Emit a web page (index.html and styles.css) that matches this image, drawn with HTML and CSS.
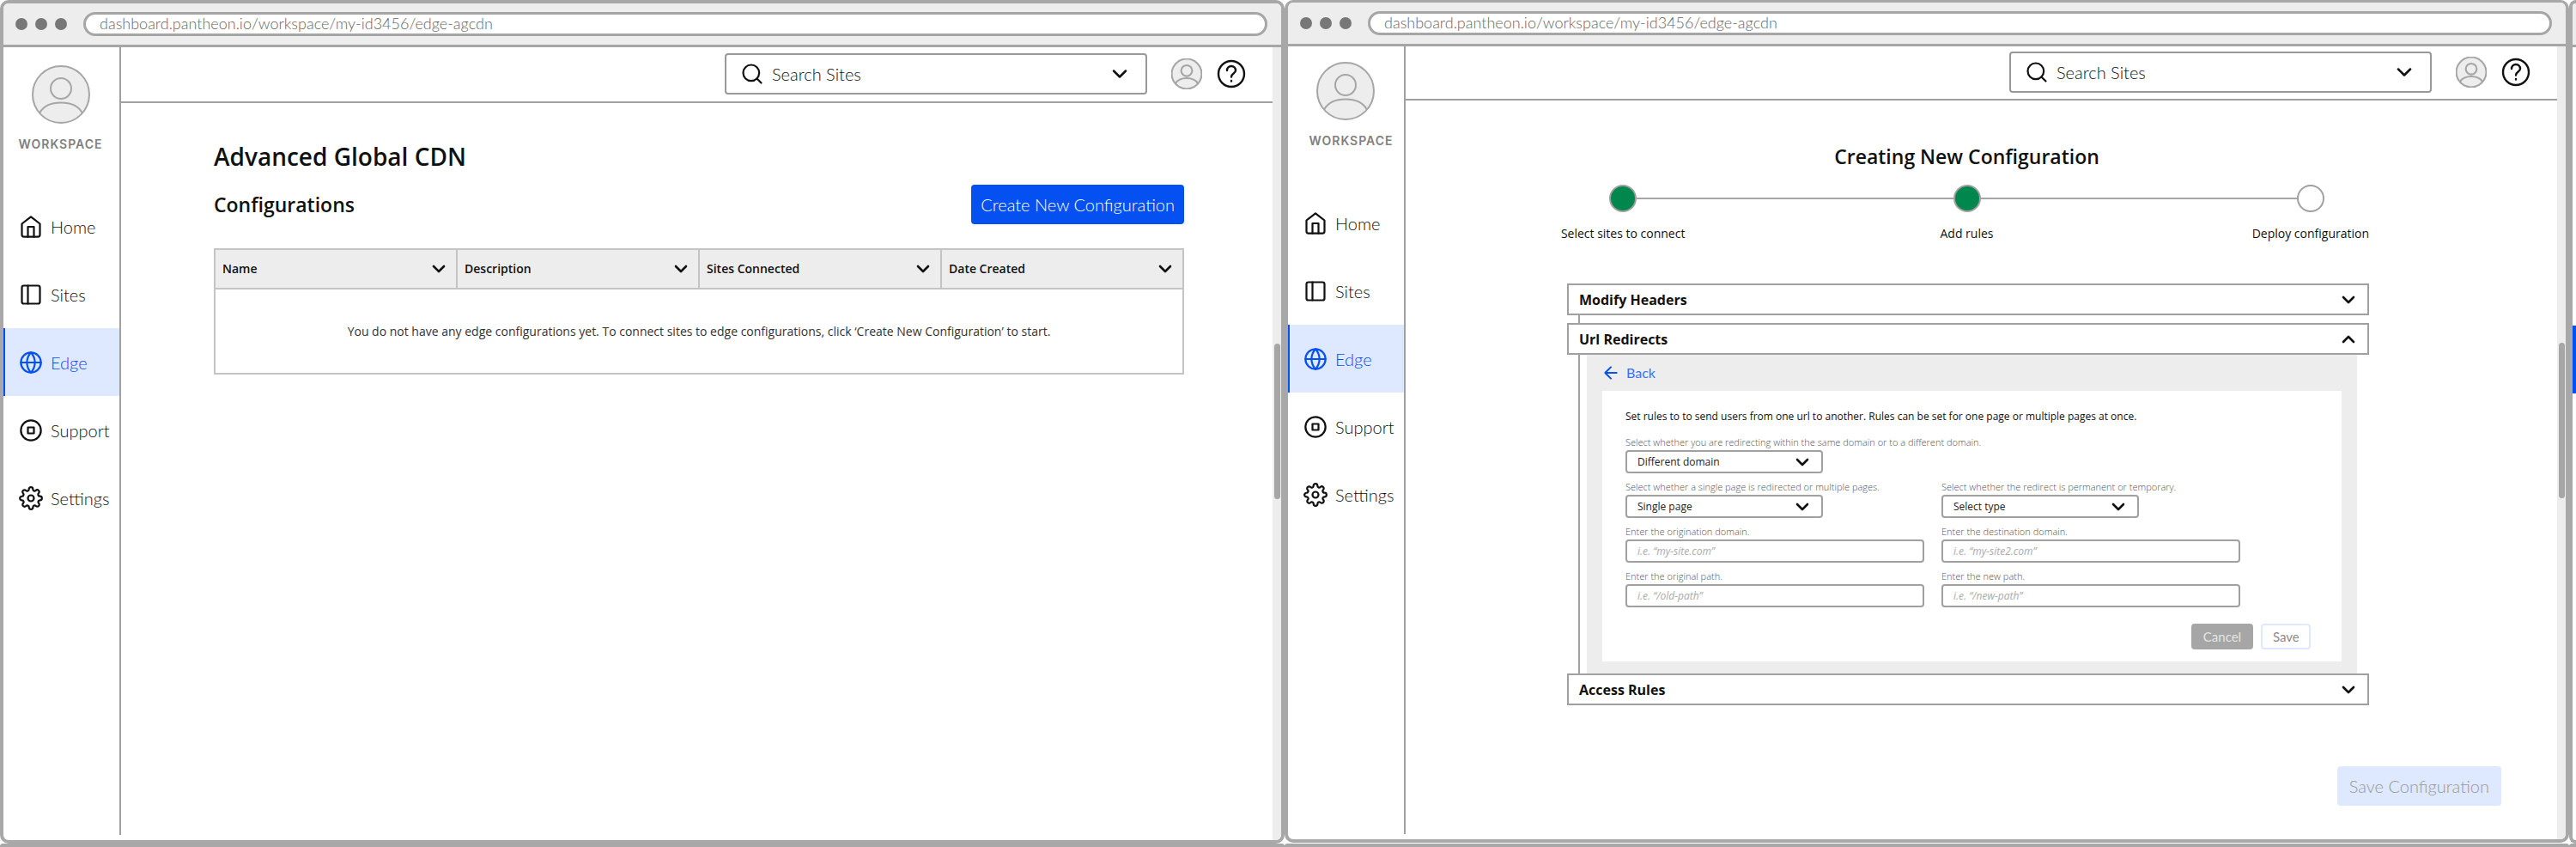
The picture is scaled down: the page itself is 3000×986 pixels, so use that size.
FILE: index.html
```html
<!DOCTYPE html>
<html lang="en">
<head>
<meta charset="utf-8">
<title>Advanced Global CDN</title>
<link rel="stylesheet" href="styles.css">
</head>
<body>
<svg class="sprite" aria-hidden="true">
  <symbol id="home" viewBox="0 0 24 24"><path d="M3 9l9-7 9 7v11a2 2 0 0 1-2 2H5a2 2 0 0 1-2-2z"/><path d="M9 22V12h6v10"/></symbol>
  <symbol id="sites" viewBox="0 0 24 24"><rect x="3" y="3" width="18" height="18" rx="2"/><path d="M9 3v18"/></symbol>
  <symbol id="globe" viewBox="0 0 24 24"><circle cx="12" cy="12" r="10"/><path d="M2 12h20M12 2a15.3 15.3 0 0 1 4 10 15.3 15.3 0 0 1-4 10 15.3 15.3 0 0 1-4-10 15.3 15.3 0 0 1 4-10z"/></symbol>
  <symbol id="support" viewBox="0 0 24 24"><circle cx="12" cy="12" r="10"/><rect x="9" y="9" width="6" height="6"/></symbol>
  <symbol id="gear" viewBox="0 0 24 24"><circle cx="12" cy="12" r="3"/><path d="M19.4 15a1.65 1.65 0 0 0 .33 1.82l.06.06a2 2 0 0 1 0 2.83 2 2 0 0 1-2.83 0l-.06-.06a1.65 1.65 0 0 0-1.82-.33 1.65 1.65 0 0 0-1 1.51V21a2 2 0 0 1-2 2 2 2 0 0 1-2-2v-.09A1.65 1.65 0 0 0 9 19.4a1.65 1.65 0 0 0-1.82.33l-.06.06a2 2 0 0 1-2.83 0 2 2 0 0 1 0-2.83l.06-.06a1.65 1.65 0 0 0 .33-1.82 1.65 1.65 0 0 0-1.51-1H3a2 2 0 0 1-2-2 2 2 0 0 1 2-2h.09A1.65 1.65 0 0 0 4.6 9a1.65 1.65 0 0 0-.33-1.82l-.06-.06a2 2 0 0 1 0-2.83 2 2 0 0 1 2.83 0l.06.06a1.65 1.65 0 0 0 1.82.33H9a1.65 1.65 0 0 0 1-1.51V3a2 2 0 0 1 2-2 2 2 0 0 1 2 2v.09a1.65 1.65 0 0 0 1 1.51 1.65 1.65 0 0 0 1.82-.33l.06-.06a2 2 0 0 1 2.83 0 2 2 0 0 1 0 2.83l-.06.06a1.65 1.65 0 0 0-.33 1.82V9a1.65 1.65 0 0 0 1.51 1H21a2 2 0 0 1 2 2 2 2 0 0 1-2 2h-.09a1.65 1.65 0 0 0-1.51 1z"/></symbol>
  <symbol id="search" viewBox="0 0 24 24"><circle cx="11" cy="11" r="8"/><path d="M21 21l-4.35-4.35"/></symbol>
  <symbol id="chevron" viewBox="0 0 24 24"><path d="M6 9l6 6 6-6"/></symbol>
  <symbol id="chevron-up" viewBox="0 0 24 24"><path d="M6 15l6-6 6 6"/></symbol>
  <symbol id="arrow-left" viewBox="0 0 24 24"><path d="M20 12H4M12 20l-8-8 8-8"/></symbol>
  <symbol id="help" viewBox="0 0 34 34"><circle cx="17" cy="17" r="15"/><path d="M12 13a5 5 0 0 1 10 0c0 3.500-5 3.500-5 7.500M17 25v.5"/></symbol>
  <symbol id="user" viewBox="0 0 68 68"><circle cx="34" cy="34" r="33" fill="#ededed"/><circle cx="34" cy="27" r="12"/><path d="M9.500 55C14 47 24 43.500 34 43.500S54 47 58.500 55"/></symbol>
</svg>

<div class="board">
  <section class="window" aria-label="Configurations window">
    <div class="titlebar">
      <span class="dot"></span><span class="dot"></span><span class="dot"></span>
      <input class="address" aria-label="Address" value="dashboard.pantheon.io/workspace/my-id3456/edge-agcdn">
    </div>
    <div class="app">
      <aside class="sidebar">
        <svg class="avatar"><use href="#user"/></svg>
        <div class="workspace">WORKSPACE</div>
        <nav class="nav">
          <a href="#"><svg class="icon"><use href="#home"/></svg>Home</a>
          <a href="#"><svg class="icon"><use href="#sites"/></svg>Sites</a>
          <a href="#" class="active" aria-current="page"><svg class="icon"><use href="#globe"/></svg>Edge</a>
          <a href="#"><svg class="icon"><use href="#support"/></svg>Support</a>
          <a href="#"><svg class="icon"><use href="#gear"/></svg>Settings</a>
        </nav>
      </aside>
      <div class="content">
        <header class="topbar">
          <div class="search">
            <svg class="icon"><use href="#search"/></svg>
            <input type="text" aria-label="Search Sites" placeholder="Search Sites">
            <button class="plain" aria-label="Show sites"><svg class="icon bold"><use href="#chevron"/></svg></button>
          </div>
          <button class="plain" aria-label="Account"><svg class="user"><use href="#user"/></svg></button>
          <button class="plain" aria-label="Help"><svg class="help"><use href="#help"/></svg></button>
        </header>
        <main class="listing">
          <h1>Advanced Global CDN</h1>
          <div class="listing-head">
            <h2>Configurations</h2>
            <button class="button primary">Create New Configuration</button>
          </div>
          <table class="table">
            <thead>
              <tr>
                <th><div class="th">Name<svg class="icon small"><use href="#chevron"/></svg></div></th>
                <th><div class="th">Description<svg class="icon small"><use href="#chevron"/></svg></div></th>
                <th><div class="th">Sites Connected<svg class="icon small"><use href="#chevron"/></svg></div></th>
                <th><div class="th">Date Created<svg class="icon small"><use href="#chevron"/></svg></div></th>
              </tr>
            </thead>
            <tbody>
              <tr><td colspan="4">You do not have any edge configurations yet. To connect sites to edge configurations, click ‘Create New Configuration’ to start.</td></tr>
            </tbody>
          </table>
        </main>
      </div>
      <div class="scroll"><div class="thumb"></div></div>
    </div>
  </section>

  <section class="window raised" aria-label="New configuration window">
    <div class="titlebar">
      <span class="dot"></span><span class="dot"></span><span class="dot"></span>
      <input class="address" aria-label="Address" value="dashboard.pantheon.io/workspace/my-id3456/edge-agcdn">
    </div>
    <div class="app">
      <aside class="sidebar">
        <svg class="avatar"><use href="#user"/></svg>
        <div class="workspace">WORKSPACE</div>
        <nav class="nav">
          <a href="#"><svg class="icon"><use href="#home"/></svg>Home</a>
          <a href="#"><svg class="icon"><use href="#sites"/></svg>Sites</a>
          <a href="#" class="active" aria-current="page"><svg class="icon"><use href="#globe"/></svg>Edge</a>
          <a href="#"><svg class="icon"><use href="#support"/></svg>Support</a>
          <a href="#"><svg class="icon"><use href="#gear"/></svg>Settings</a>
        </nav>
      </aside>
      <div class="content">
        <header class="topbar">
          <div class="search">
            <svg class="icon"><use href="#search"/></svg>
            <input type="text" aria-label="Search Sites" placeholder="Search Sites">
            <button class="plain" aria-label="Show sites"><svg class="icon bold"><use href="#chevron"/></svg></button>
          </div>
          <button class="plain" aria-label="Account"><svg class="user"><use href="#user"/></svg></button>
          <button class="plain" aria-label="Help"><svg class="help"><use href="#help"/></svg></button>
        </header>
        <main class="wizard">
          <h2>Creating New Configuration</h2>
          <ol class="steps">
            <li class="done"><div class="track"><i></i><b></b><i></i></div>Select sites to connect</li>
            <li class="done"><div class="track"><i></i><b></b><i></i></div>Add rules</li>
            <li><div class="track"><i></i><b></b><i></i></div>Deploy configuration</li>
          </ol>
          <div class="accordion">
            <button class="rule">Modify Headers<svg class="icon small"><use href="#chevron"/></svg></button>
            <div class="joint"></div>
            <button class="rule" aria-expanded="true">Url Redirects<svg class="icon small"><use href="#chevron-up"/></svg></button>
            <div class="joint">
              <div class="panel">
                <a href="#" class="back"><svg class="icon arrow"><use href="#arrow-left"/></svg>Back</a>
                <form class="card">
                  <p>Set rules to to send users from one url to another. Rules can be set for one page or multiple pages at once.</p>
                  <div class="fields">
                    <div class="field wide">
                      <label for="domain">Select whether you are redirecting within the same domain or to a different domain.</label>
                      <div class="select"><select id="domain"><option>Different domain</option></select><svg class="icon small"><use href="#chevron"/></svg></div>
                    </div>
                    <div class="field">
                      <label for="pages">Select whether a single page is redirected or multiple pages.</label>
                      <div class="select"><select id="pages"><option>Single page</option></select><svg class="icon small"><use href="#chevron"/></svg></div>
                    </div>
                    <div class="field">
                      <label for="type">Select whether the redirect is permanent or temporary.</label>
                      <div class="select"><select id="type"><option>Select type</option></select><svg class="icon small"><use href="#chevron"/></svg></div>
                    </div>
                    <div class="field">
                      <label for="origin">Enter the origination domain.</label>
                      <input id="origin" type="text" placeholder="i.e. “my-site.com”">
                    </div>
                    <div class="field">
                      <label for="destination">Enter the destination domain.</label>
                      <input id="destination" type="text" placeholder="i.e. “my-site2.com”">
                    </div>
                    <div class="field">
                      <label for="old-path">Enter the original path.</label>
                      <input id="old-path" type="text" placeholder="i.e. “/old-path”">
                    </div>
                    <div class="field">
                      <label for="new-path">Enter the new path.</label>
                      <input id="new-path" type="text" placeholder="i.e. “/new-path”">
                    </div>
                  </div>
                  <div class="actions">
                    <button type="button" class="mini cancel">Cancel</button>
                    <button type="button" class="mini save">Save</button>
                  </div>
                </form>
              </div>
            </div>
            <button class="rule">Access Rules<svg class="icon small"><use href="#chevron"/></svg></button>
          </div>
          <button class="button muted">Save Configuration</button>
        </main>
      </div>
      <div class="scroll"><div class="thumb"></div></div>
    </div>
  </section>

  <section class="window cut" aria-hidden="true">
    <div class="titlebar"></div>
    <div class="app"><div class="mark"></div></div>
  </section>
  <div class="next"></div>
  <div class="next"></div>
  <div class="next cut"></div>
</div>
</body>
</html>
```
FILE: styles.css
```css
* { box-sizing: border-box; }
body {
  margin: 0;
  background: #fff;
  color: #111;
  font: 14px/20px "Open Sans", "Noto Sans", sans-serif;
  overflow: hidden;
}
h1, h2, p, ol { margin: 0; padding: 0; }
button, input, select { font: inherit; color: inherit; margin: 0; }
a { text-decoration: none; }
.sprite { position: absolute; width: 0; height: 0; }

svg { fill: none; stroke: currentColor; stroke-linecap: round; stroke-linejoin: round; flex: none; display: block; }
.icon { width: 28px; height: 28px; stroke-width: 1.9; }
.icon.bold { stroke-width: 2.2; }
.icon.small { width: 24px; height: 24px; stroke-width: 2.6; }
.icon.arrow { width: 20px; height: 20px; stroke-width: 2.4; }

.board {
  display: grid;
  grid-template-columns: 1fr 1fr 8px;
  grid-template-rows: 1fr 4px;
  min-height: 100vh;
  overflow: hidden;
}
.window {
  display: flex;
  flex-direction: column;
  border: 4px solid #a8a8a8;
  border-radius: 10px;
  overflow: hidden;
}
.window.raised { border-top-width: 3px; margin-bottom: 1px; }
.window.cut { border-right: 0; border-radius: 10px 0 0 10px; }
.next { border: 4px solid #a8a8a8; border-bottom: 0; border-radius: 10px 10px 0 0; }
.next.cut { border-right: 0; border-radius: 10px 0 0 0; }
.mark { margin-top: 324px; height: 79px; width: 4px; background: #0550f0; }

.titlebar {
  display: flex;
  align-items: center;
  gap: 9px;
  height: 51px;
  padding: 0 16px 0 14px;
  background: #ededed;
  border-bottom: 3px solid #a6a6a6;
}
.dot { width: 14px; height: 14px; border-radius: 50%; background: #777; }
.address {
  flex: 1;
  min-width: 0;
  height: 28px;
  margin-left: 10px;
  padding: 0 16px 2px;
  border: 3px solid #a6a6a6;
  border-radius: 14px;
  background: #fff;
  color: #666;
  font: 300 18px/20px Lato, sans-serif;
}

.app { flex: 1; display: flex; }
.sidebar {
  width: 137px;
  flex: none;
  display: flex;
  flex-direction: column;
  align-items: center;
  margin-bottom: 6px;
  padding: 21px 2px 0 0;
  border-right: 2px solid #a0a0a0;
}
.raised .sidebar { padding-top: 18px; }
.avatar { width: 68px; height: 68px; stroke-width: 2; color: #a6a6a6; }
.workspace {
  margin-top: 14px;
  font: 600 14px/20px Inter, sans-serif;
  letter-spacing: 1px;
  color: #808080;
}
.raised .workspace { margin-left: 14px; }
.nav { align-self: stretch; margin: 46px -2px 0 0; }
.nav a {
  display: flex;
  align-items: center;
  gap: 9px;
  height: 79px;
  padding-left: 18px;
  color: #111;
  font: 300 20px/24px Lato, sans-serif;
}
.nav a svg { color: #111; }
.nav a.active { background: #dee8fe; border-left: 2px solid #0550f0; padding-left: 16px; color: #0550f0; }
.nav a.active svg { color: #0550f0; }

.content { flex: 1; display: flex; flex-direction: column; min-width: 0; }
.topbar {
  display: flex;
  align-items: center;
  justify-content: flex-end;
  height: 65px;
  padding: 0 31px 2px 0;
  border-bottom: 2px solid #a0a0a0;
}
.raised .topbar { height: 63px; }
.search {
  display: flex;
  align-items: center;
  width: 492px;
  height: 48px;
  margin-right: 28px;
  padding: 0 16px;
  gap: 9px;
  border: 2px solid #999;
  border-radius: 4px;
}
.search input {
  flex: 1;
  min-width: 0;
  padding: 0;
  border: 0;
  background: none;
  font: 300 20px/24px Lato, sans-serif;
}
.search input::placeholder { color: #111; opacity: 1; }
.plain { padding: 0; border: 0; background: none; }
.user { width: 36px; height: 36px; stroke-width: 4; color: #a6a6a6; margin-right: 17px; }
.help { width: 34px; height: 34px; stroke-width: 2.4; }

.scroll { width: 10px; padding: 345px 1px 0 2px; background: #ededed; }
.thumb { height: 181px; border-radius: 4px; background: #a6a6a6; }

h1 { font-size: 28px; line-height: 36px; font-weight: 600; }
h2 { font-size: 23px; line-height: 32px; font-weight: 600; }
.listing { padding: 44px 103px 0 108px; }
.listing-head { display: flex; align-items: center; justify-content: space-between; margin-top: 15px; margin-bottom: 28px; }
.button {
  height: 46px;
  padding: 0 14px;
  border: 0;
  border-radius: 4px;
  font: 300 20px/24px Lato, sans-serif;
}
.primary { padding: 0 11px; background: #0550f0; color: #fff; }
.muted { background: #dee8fe; color: #999; }

.table { width: 100%; table-layout: fixed; border-collapse: collapse; }
.table th { height: 46px; padding: 0 8px; border: 2px solid #c4c4c4; background: #ededed; font-weight: 600; }
.th { display: flex; align-items: center; justify-content: space-between; }
.table td { height: 99px; border: 2px solid #c4c4c4; text-align: center; color: #333; }

.wizard { flex: 1; display: flex; flex-direction: column; padding: 49px 87px 39px 53px; }
.wizard h2 { text-align: center; }
.steps { display: grid; grid-template-columns: repeat(3, 1fr); margin-top: 17px; list-style: none; }
.steps li { text-align: center; }
.track { display: flex; align-items: center; margin-bottom: 15px; }
.track i { flex: 1; height: 2px; background: #a6a6a6; }
.track b { width: 32px; height: 32px; border: 2px solid #a0a0a0; border-radius: 50%; background: #fff; }
.done b { background: #00874d; }
.steps li:first-child i:first-child, .steps li:last-child i:last-child { visibility: hidden; }

.accordion { display: flex; flex-direction: column; margin: 48px 132px 0 135px; }
.rule {
  display: flex;
  align-items: center;
  justify-content: space-between;
  height: 37px;
  padding: 0 10px 0 12px;
  border: 2px solid #a0a0a0;
  background: #fff;
  font-size: 16px;
  font-weight: 700;
}
.joint { min-height: 9px; margin: 0 14px 0 13px; padding-left: 8px; border-left: 2px solid #a0a0a0; }
.panel { padding: 0 18px 14px; background: #ededed; }
.back { display: flex; align-items: center; gap: 8px; height: 42px; color: #3970f5; font: 16px/20px Lato, sans-serif; }
.back svg { color: #0550f0; }
.card { padding: 20px 36px 14px 27px; background: #fff; }
.card p { font-size: 12px; line-height: 20px; }
.fields { display: grid; grid-template-columns: 348px 348px; gap: 8px 20px; margin-top: 12px; font-size: 12px; }
.wide { grid-column: 1 / -1; }
.field label { display: block; margin-bottom: 1px; font-size: 11px; font-weight: 300; line-height: 16px; color: #555; white-space: nowrap; }
.field input, .field select {
  display: block;
  width: 100%;
  height: 27px;
  padding: 0 12px;
  border: 2px solid #a0a0a0;
  border-radius: 4px;
  background: #fff;
  line-height: 16px;
}
.field input::placeholder { color: #aaa; opacity: 1; font-style: italic; }
.select { position: relative; width: 230px; }
.field select { appearance: none; color: #222; }
.select svg { position: absolute; right: 12px; top: 2px; pointer-events: none; }
.actions { display: flex; justify-content: flex-end; gap: 9px; margin-top: 19px; }
.mini { height: 30px; padding: 0 12px; border-radius: 4px; font: 15px/20px Lato, sans-serif; }
.cancel { width: 72px; border: 0; background: #a6a6a6; color: #e4e4e4; }
.save { width: 58px; border: 2px solid #dee8fe; background: #fff; color: #8c8c8c; }
.wizard > .button { align-self: flex-end; margin: auto -22px 0 0; }
```
